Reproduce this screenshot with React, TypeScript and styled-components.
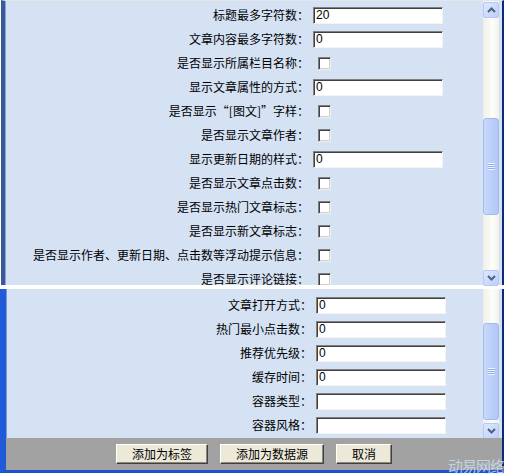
import React from 'react';
import styled, { createGlobalStyle } from 'styled-components';

// a curly quote held in a full CJK cell, mark pushed to the inner side
const Quote = styled.span<{ open?: boolean }>`
  display: inline-block;
  width: 12px;
  text-align: ${(p) => (p.open ? 'right' : 'left')};
`;

type Field = { label: React.ReactNode; kind: 'text' | 'check'; value?: string };

const topFields: Field[] = [
  { label: '标题最多字符数：', kind: 'text', value: '20' },
  { label: '文章内容最多字符数：', kind: 'text', value: '0' },
  { label: '是否显示所属栏目名称：', kind: 'check' },
  { label: '显示文章属性的方式：', kind: 'text', value: '0' },
  {
    label: (
      <>
        是否显示<Quote open>“</Quote>[图文]<Quote>”</Quote>字样：
      </>
    ),
    kind: 'check',
  },
  { label: '是否显示文章作者：', kind: 'check' },
  { label: '显示更新日期的样式：', kind: 'text', value: '0' },
  { label: '是否显示文章点击数：', kind: 'check' },
  { label: '是否显示热门文章标志：', kind: 'check' },
  { label: '是否显示新文章标志：', kind: 'check' },
  { label: '是否显示作者、更新日期、点击数等浮动提示信息：', kind: 'check' },
  { label: '是否显示评论链接：', kind: 'check' },
];

const bottomFields: Field[] = [
  { label: '文章打开方式：', kind: 'text', value: '0' },
  { label: '热门最小点击数：', kind: 'text', value: '0' },
  { label: '推荐优先级：', kind: 'text', value: '0' },
  { label: '缓存时间：', kind: 'text', value: '0' },
  { label: '容器类型：', kind: 'text', value: '' },
  { label: '容器风格：', kind: 'text', value: '' },
];

const Chevron = ({ up }: { up?: boolean }) => (
  <svg width="9" height="6" viewBox="0 0 9 6">
    <polyline
      points={up ? '1,5 4.5,1.5 8,5' : '1,1 4.5,4.5 8,1'}
      fill="none"
      stroke="#4d6185"
      strokeWidth="2"
    />
  </svg>
);

// spaces/thumb are heights in px, drawn top to bottom
const ScrollBar = ({ parts }: { parts: (number | 'up' | 'down' | { thumb: number })[] }) => (
  <Track>
    {parts.map((p, i) => {
      if (p === 'up' || p === 'down')
        return (
          <ArrowButton key={i}>
            <Chevron up={p === 'up'} />
          </ArrowButton>
        );
      if (typeof p === 'number') return <TrackSpace key={i} size={p} />;
      return (
        <Thumb key={i} size={p.thumb}>
          <Grip />
        </Thumb>
      );
    })}
  </Track>
);

const FormRows = ({ fields, labelWidth }: { fields: Field[]; labelWidth: number }) => (
  <Form labelWidth={labelWidth}>
    {fields.map((f, i) => (
      <React.Fragment key={i}>
        <Label>{f.label}</Label>
        <div>
          {f.kind === 'text' ? (
            <TextInput defaultValue={f.value} />
          ) : (
            <CheckBox type="checkbox" />
          )}
        </div>
      </React.Fragment>
    ))}
  </Form>
);

const App = () => (
  <>
    <GlobalStyle />
    <Page>
      <TopPanel>
        <Viewport>
          <FormRows fields={topFields} labelWidth={304} />
        </Viewport>
        <ScrollBar parts={['up', 100, { thumb: 97 }, 54, 'down']} />
        <EdgeStrip />
      </TopPanel>

      <BottomPanel>
        <BodyRow>
          <Viewport padTop={4}>
            <FormRows fields={bottomFields} labelWidth={306} />
          </Viewport>
          <ScrollBar parts={[34, { thumb: 97 }, 2, 'down']} />
          <EdgeStrip />
        </BodyRow>
        <ButtonBar>
          <Button>添加为标签</Button>
          <Button>添加为数据源</Button>
          <Button>取消</Button>
        </ButtonBar>
      </BottomPanel>

      <Watermark>动易网络</Watermark>
    </Page>
  </>
);

export default App;

const GlobalStyle = createGlobalStyle`
  body {
    margin: 0;
    background: #ffffff;
    font-family: "Noto Sans CJK SC", "Liberation Sans", sans-serif;
    font-size: 12px;
  }
`;

const Page = styled.div`
  position: relative;
  width: 510px;
  height: 475px;
  overflow: hidden;
  display: flex;
  flex-direction: column;
  gap: 4px;
`;

const TopPanel = styled.div`
  display: flex;
  width: 503px;
  height: 285px;
  margin-left: 1px;
  box-sizing: border-box;
  border-top: 1px solid #e3e6ea;
  border-left: 4px solid #3a5a9e;
  border-right: 2px solid #0b2a78;
  background: #d4e2f4;
  box-shadow: inset 1px 0 #8ea3cb;
`;

const BottomPanel = styled.div`
  display: flex;
  flex-direction: column;
  width: 504px;
  height: 184px;
  box-sizing: border-box;
  border-left: 6px solid #1f5bd9;
  border-right: 2px solid #0b2a78;
  border-bottom: 3px solid #1c50cf;
  background: #d4e2f4;
  box-shadow: inset 1px 0 #7d98cf;
`;

const BodyRow = styled.div`
  display: flex;
  height: 149px;
`;

const Viewport = styled.div<{ padTop?: number }>`
  flex: 1;
  overflow: hidden;
  padding-top: ${(p) => p.padTop ?? 2}px;
`;

const EdgeStrip = styled.div`
  width: 3px;
`;

const Form = styled.div<{ labelWidth: number }>`
  display: grid;
  grid-template-columns: ${(p) => p.labelWidth}px 1fr;
  grid-auto-rows: 24px;
  column-gap: 4px;
  align-items: center;
`;

const Label = styled.div`
  text-align: right;
  white-space: nowrap;
  color: #000;
  font-size: 12px;
  line-height: 14px;
`;

const TextInput = styled.input`
  display: block;
  width: 130px;
  height: 17px;
  box-sizing: border-box;
  margin: 0;
  padding: 0 2px;
  border: 1px solid;
  border-color: #7f7f7f #f4f4f4 #f4f4f4 #7f7f7f;
  box-shadow: inset 1px 1px #404040;
  background: #fff;
  font-family: "Liberation Sans", Arial, sans-serif;
  font-size: 12px;
  color: #000;
  outline: none;
`;

const CheckBox = styled.input`
  appearance: none;
  display: block;
  width: 13px;
  height: 13px;
  margin: 0 0 0 5px;
  box-sizing: border-box;
  border: 1px solid;
  border-color: #808080 #f0f0f0 #f0f0f0 #808080;
  box-shadow: inset 1px 1px #404040, inset -1px -1px #d4d0c8;
  background: #fff;
`;

const Track = styled.div`
  display: flex;
  flex-direction: column;
  width: 16px;
  background: linear-gradient(to right, #f1efe6, #fdfdfa 60%, #f3f1ea);
`;

const TrackSpace = styled.div<{ size: number }>`
  height: ${(p) => p.size}px;
  flex-shrink: 0;
`;

const ArrowButton = styled.div`
  display: flex;
  align-items: center;
  justify-content: center;
  height: 16px;
  flex-shrink: 0;
  box-sizing: border-box;
  margin-top: 1px;
  border: 1px solid #b4c8f6;
  border-radius: 2px;
  background: linear-gradient(135deg, #dde8fe, #bcd0fa);
`;

const Thumb = styled.div<{ size: number }>`
  display: flex;
  align-items: center;
  justify-content: center;
  height: ${(p) => p.size}px;
  flex-shrink: 0;
  box-sizing: border-box;
  border: 1px solid #a3bbec;
  border-radius: 3px;
  background: linear-gradient(to right, #c9d8fc, #bccffa 50%, #b2c7f6);
`;

const Grip = styled.div`
  width: 7px;
  height: 7px;
  background: repeating-linear-gradient(
    to bottom,
    #eef3fe 0,
    #eef3fe 1px,
    #93aff0 1px,
    #93aff0 2px
  );
`;

const ButtonBar = styled.div`
  display: flex;
  align-items: center;
  justify-content: center;
  gap: 12px;
  height: 32px;
  background: #a2a2a2;
`;

const Button = styled.button`
  height: 20px;
  padding: 0 15px;
  margin: 0;
  box-sizing: border-box;
  border: 1px solid;
  border-color: #ffffff #404040 #404040 #ffffff;
  box-shadow: inset -1px -1px #8a887c;
  background: #ece9d8;
  font-family: "Noto Sans CJK SC", sans-serif;
  font-size: 12px;
  line-height: 16px;
  color: #000;
`;

const Watermark = styled.div`
  position: absolute;
  right: 6px;
  bottom: 1px;
  font-family: "Noto Sans CJK SC", sans-serif;
  font-size: 15px;
  line-height: 17px;
  letter-spacing: -1px;
  color: rgba(205, 225, 250, 0.8);
`;
